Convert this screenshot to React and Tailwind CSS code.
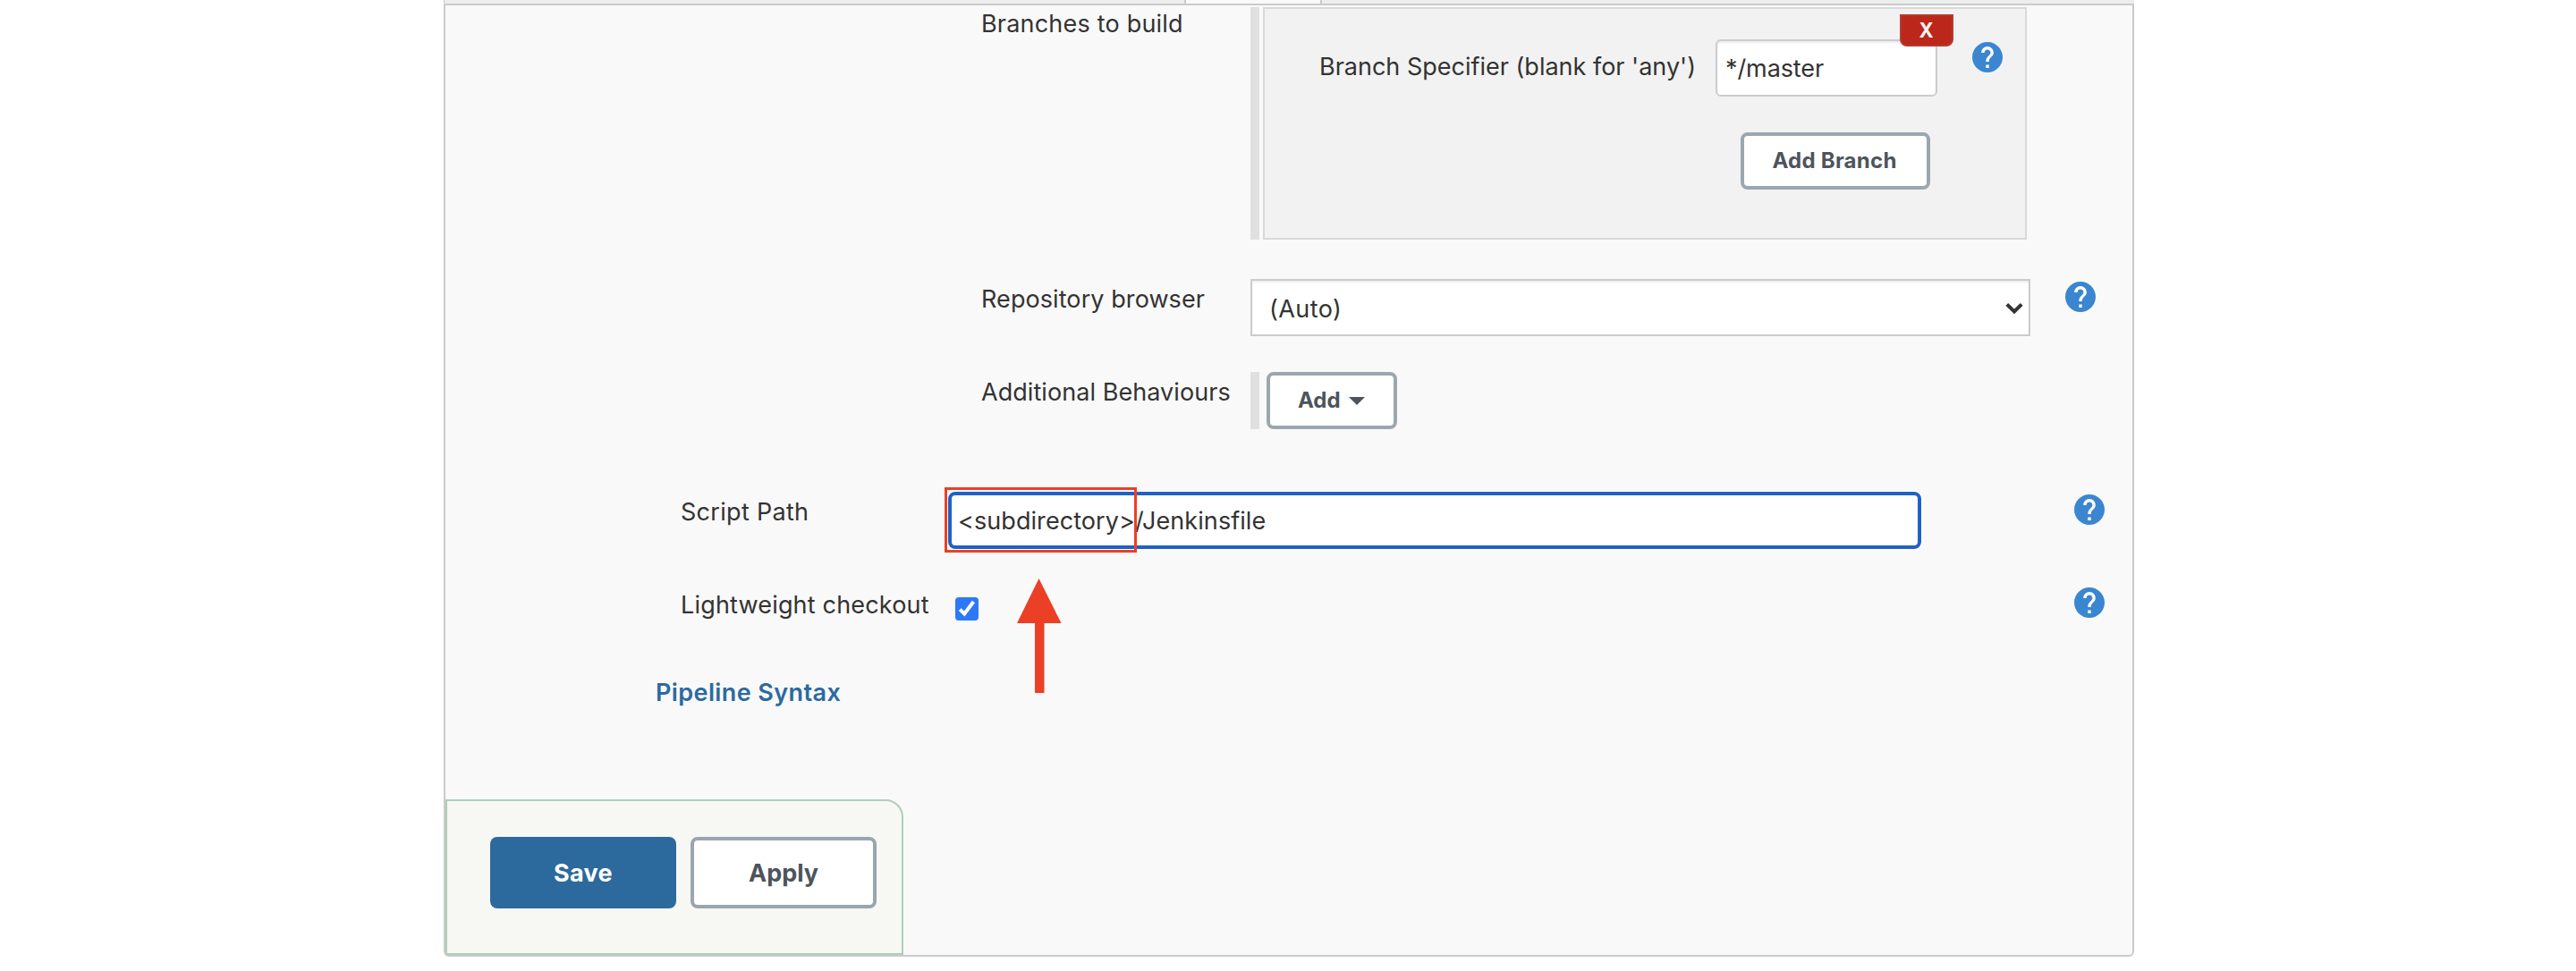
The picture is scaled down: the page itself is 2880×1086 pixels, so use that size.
import React from "react";

function HelpIcon({ className }) {
  return (
    <svg viewBox="2 2 20 20" className={`h-[34px] w-[34px] shrink-0 ${className}`}>
      <circle cx="12" cy="12" r="9" fill="#fff" />
      <path
        fill="#3b86d0"
        d="M12 2C6.48 2 2 6.48 2 12s4.48 10 10 10 10-4.48 10-10S17.52 2 12 2zm1 17h-2v-2h2v2zm2.07-7.75l-.9.92C13.45 12.9 13 13.5 13 15h-2v-.5c0-1.1.45-2.1 1.17-2.83l1.24-1.26c.37-.36.59-.86.59-1.41 0-1.1-.9-2-2-2s-2 .9-2 2H8c0-2.21 1.79-4 4-4s4 1.79 4 4c0 .88-.36 1.68-.93 2.25z"
      />
    </svg>
  );
}

function TabStrip() {
  return (
    <div className="-mx-[2px] flex h-[6px] shrink-0 border-b-2 border-[#cbcbcb] pl-[1px]">
      <div className="w-[829px] border-r-2 border-[#cbcbcb] bg-[#ededed]" />
      <div className="w-[150px]" />
      <div className="flex-1 border-l-2 border-[#cbcbcb] bg-[#ededed]" />
    </div>
  );
}

function BranchesRow() {
  return (
    <div className="mt-[2px] flex h-[260px] shrink-0 pl-[599px]">
      <div className="w-[301px] pt-[1px] leading-[36px] tracking-[0.2px]">Branches to build</div>
      <div className="w-[10px] bg-[#e0e0e0]" />
      <div className="ml-1 w-[854px] border-2 border-[#d9d9d9] bg-[#f2f2f2]">
        <div className="relative flex items-start pt-[34px]">
          <div className="mt-[11px] ml-[61px] w-[443px] leading-[40px] whitespace-nowrap">
            Branch Specifier (blank for 'any')
          </div>
          <div className="flex h-[64px] w-[248px] items-center rounded-[6px] border-2 border-[#cccccc] bg-white pl-[9px] tracking-[-0.09px] shadow-[inset_0_2px_2px_rgba(0,0,0,0.075)]">
            <span className="mt-[2px]">*/master</span>
          </div>
          <HelpIcon className="mt-[3px] ml-[39px]" />
          <button className="absolute top-[6px] left-[710px] flex h-[36px] w-[60px] items-center justify-center rounded-b-[8px] border-2 border-[#b23d30] bg-[#bb271a] pr-[2px] text-[23px] leading-[32px] font-bold text-[#f2f2f2]">
            <span className="scale-x-[0.95]">X</span>
          </button>
        </div>
        <button className="mt-[40px] ml-[532px] flex h-[64px] w-[212px] items-center justify-center rounded-[8px] border-4 border-[#9ba7ae] bg-white pr-[2px] text-[24px] font-bold tracking-[0.26px] text-[#4d545d]">
          Add Branch
        </button>
      </div>
    </div>
  );
}

function RepositoryRow() {
  return (
    <div className="mt-[44px] flex h-[64px] shrink-0 items-start pl-[599px]">
      <div className="mt-[3px] w-[301px] leading-[40px] tracking-[0.08px]">Repository browser</div>
      <div className="flex h-[64px] w-[872px] items-center justify-between border-2 border-[#cccccc] bg-white pr-[6px] pl-[19px] tracking-[0.42px] shadow-[inset_0_2px_2px_rgba(0,0,0,0.075)]">
        <span className="mt-[4px]">(Auto)</span>
        <svg viewBox="0 0 20 14" className="mt-[2px] h-[14px] w-[20px]">
          <path d="M1.8 2.4L10 10.4L18.2 2.4" fill="none" stroke="#333" strokeWidth="4" />
        </svg>
      </div>
      <HelpIcon className="mt-[3px] ml-[39px]" />
    </div>
  );
}

function BehavioursRow() {
  return (
    <div className="mt-[40px] flex h-[64px] shrink-0 items-start pl-[599px]">
      <div className="mt-[3px] w-[301px] leading-[40px] tracking-[0.06px]">Additional Behaviours</div>
      <div className="h-[64px] w-[10px] bg-[#e0e0e0]" />
      <button className="ml-2 flex h-[64px] w-[146px] items-center rounded-[8px] border-4 border-[#9ba7ae] bg-white pl-[31px] text-[24px] font-bold text-[#4d545d]">
        <span>Add</span>
        <svg viewBox="0 0 18 9" className="ml-[9px] h-[9px] w-[18px]">
          <path d="M0 0H18L9 9Z" fill="#4d545d" />
        </svg>
      </button>
    </div>
  );
}

function ScriptPathRow() {
  return (
    <div className="mt-[70px] flex h-[64px] shrink-0 items-start pl-[263px]">
      <div className="mt-[3px] w-[299px] leading-[40px] tracking-[0.3px]">Script Path</div>
      <div className="relative flex h-[64px] w-[1088px] items-center rounded-[8px] border-4 border-[#2161c7] bg-white pl-[7px] tracking-[0.07px] shadow-[0_0_0_2px_#ffffff]">
        <span className="mt-[2px]">&lt;subdirectory&gt;/Jenkinsfile</span>
        <div className="absolute -top-[9px] -left-[8px] h-[73px] w-[215px] border-3 border-[#eb4026]" />
        <svg viewBox="0 0 50 128" className="absolute top-[93px] left-[72.5px] h-[128px] w-[50px]">
          <path d="M24.5 0L49.5 50H30.5V128H20V50H0Z" fill="#eb4026" />
        </svg>
      </div>
      <HelpIcon className="mt-[3px] ml-[171px]" />
    </div>
  );
}

function CheckoutRow() {
  return (
    <div className="mt-[40px] flex h-[42px] shrink-0 items-start pl-[263px]">
      <div className="mt-[3px] w-[307px] leading-[40px] tracking-[0.18px]">Lightweight checkout</div>
      <div className="mt-[14px] h-[26px] w-[26px] rounded-[4px] bg-[#2d78f7]">
        <svg viewBox="0 0 26 26" className="h-[26px] w-[26px]">
          <path d="M5.2 13.6L10.2 18.4L20.4 5" fill="none" stroke="#fff" strokeWidth="4" />
        </svg>
      </div>
      <HelpIcon className="mt-[3px] ml-[1225px]" />
    </div>
  );
}

function ActionBar() {
  return (
    <div className="mt-auto flex h-[174px] w-[512px] shrink-0 gap-4 rounded-tr-[20px] border-2 border-[#b0cdbb] bg-[#f7f8f3] pt-[40px] pl-[48px] font-bold">
      <button className="flex h-[80px] w-[208px] items-center justify-center rounded-[8px] bg-[#2c699d] pt-[2px] tracking-[0.37px] text-white">
        Save
      </button>
      <button className="flex h-[80px] w-[208px] items-center justify-center rounded-[8px] border-4 border-[#9ba5ae] bg-white pt-[2px] text-[#4d545d]">
        Apply
      </button>
    </div>
  );
}

export default function App() {
  return (
    <div className="h-[1086px] w-[2880px] overflow-hidden bg-white font-['Inter',sans-serif] text-[27px] text-[#333333]">
      <div className="ml-[496px] flex h-[1070px] w-[1890px] flex-col rounded-b-[6px] border-x-2 border-b-2 border-[#cbcbcb] bg-[#f9f9f9]">
        <TabStrip />
        <BranchesRow />
        <RepositoryRow />
        <BehavioursRow />
        <ScriptPathRow />
        <CheckoutRow />
        <a className="mt-[59px] ml-[235px] self-start leading-[40px] font-semibold tracking-[0.4px] text-[#2c6a9f]">
          Pipeline Syntax
        </a>
        <ActionBar />
      </div>
    </div>
  );
}
